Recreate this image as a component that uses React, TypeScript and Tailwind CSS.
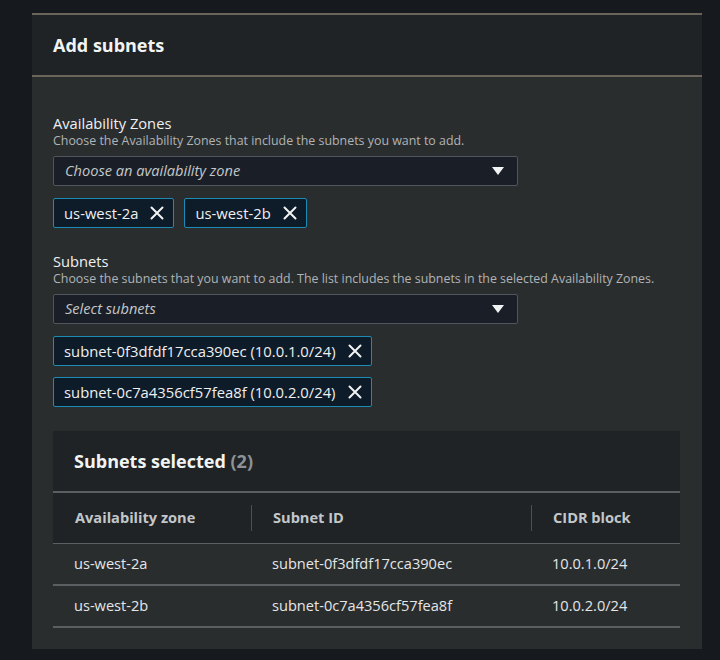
import React from 'react';

const XIcon: React.FC = () => (
  <svg width="16" height="16" viewBox="0 0 16 16" className="shrink-0">
    <path d="M2.5 2.5l11 11M13.5 2.5l-11 11" stroke="#f2f3f3" strokeWidth="2" strokeLinecap="round" fill="none" />
  </svg>
);

const Caret: React.FC = () => (
  <svg width="14" height="10" viewBox="0 0 14 10">
    <path d="M1 1h12L7 9z" fill="#f2f3f3" />
  </svg>
);

const Select: React.FC<{ placeholder: string }> = ({ placeholder }) => (
  <div className="mt-[7px] flex h-[30px] w-[465px] items-center justify-between rounded-[2px] border border-[#50565b] bg-[#1a1f27] pl-[11px] pr-[12px]">
    <span className="text-[14.6px] italic text-[#c4c7c9]">{placeholder}</span>
    <Caret />
  </div>
);

const Token: React.FC<{ label: string }> = ({ label }) => (
  <div className="flex h-[30px] items-center gap-[11px] rounded-[2px] border border-[#1e8bb5] bg-[#0e1b29] pl-[10px] pr-[8px]">
    <span className="text-[14.8px] text-[#eef0f1]">{label}</span>
    <XIcon />
  </div>
);

const rows = [
  { az: 'us-west-2a', id: 'subnet-0f3dfdf17cca390ec', cidr: '10.0.1.0/24' },
  { az: 'us-west-2b', id: 'subnet-0c7a4356cf57fea8f', cidr: '10.0.2.0/24' },
];

const App: React.FC = () => {
  return (
    <div className="min-h-[660px] bg-[#16191e] pt-[13px] pl-[32px] font-['Open_Sans',sans-serif]">
      <div className="w-[670px] border-t-2 border-[#6a655b] bg-[#2a2d2e] pb-[21px]">
        <div className="flex h-[62px] items-center border-b-2 border-[#6a655b] bg-[#1f2326] px-[21px]">
          <h2 className="text-[18px] font-bold text-[#f2f3f3]">Add subnets</h2>
        </div>

        <div className="px-[21px] pt-[36px]">
          <div className="text-[14.7px] leading-[20px] text-[#eef0f1]">Availability Zones</div>
          <div className="text-[12.4px] leading-[16px] text-[#b0b4b6]">
            Choose the Availability Zones that include the subnets you want to add.
          </div>
          <Select placeholder="Choose an availability zone" />
          <div className="mt-[12px] flex gap-[10px]">
            <Token label="us-west-2a" />
            <Token label="us-west-2b" />
          </div>

          <div className="mt-[23px] text-[14.7px] leading-[20px] text-[#eef0f1]">Subnets</div>
          <div className="text-[12.4px] leading-[16px] text-[#b0b4b6]">
            Choose the subnets that you want to add. The list includes the subnets in the selected Availability Zones.
          </div>
          <Select placeholder="Select subnets" />
          <div className="mt-[12px] flex flex-col items-start gap-[11px]">
            <Token label="subnet-0f3dfdf17cca390ec (10.0.1.0/24)" />
            <Token label="subnet-0c7a4356cf57fea8f (10.0.2.0/24)" />
          </div>

          <div className="mt-[24px] w-[627px]">
            <div className="flex h-[62px] items-center border-b-2 border-[#5b5f61] bg-[#1f2326] px-[21px]">
              <h3 className="text-[18px] font-bold text-[#f2f3f3]">
                Subnets selected <span className="text-[#8d9397]">(2)</span>
              </h3>
            </div>
            <div className="grid grid-cols-[198px_280px_149px] border-b border-[#5b5f61] bg-[#1f2326]">
              {['Availability zone', 'Subnet ID', 'CIDR block'].map((h, i) => (
                <div key={h} className="flex h-[50px] items-center">
                  {i > 0 && <div className="h-[26px] w-px bg-[#4b5054]" />}
                  <span className={`text-[14.6px] font-bold text-[#c3c7ca] ${i > 0 ? 'pl-[21px]' : 'pl-[22px]'}`}>{h}</span>
                </div>
              ))}
            </div>
            {rows.map((r) => (
              <div key={r.id} className="grid h-[42px] grid-cols-[198px_280px_149px] items-center border-b-2 border-[#5b5f61] text-[14.6px] text-[#e4e6e7]">
                <span className="pl-[21px]">{r.az}</span>
                <span className="pl-[21px]">{r.id}</span>
                <span className="pl-[21px]">{r.cidr}</span>
              </div>
            ))}
          </div>
        </div>
      </div>
    </div>
  );
};

export default App;
